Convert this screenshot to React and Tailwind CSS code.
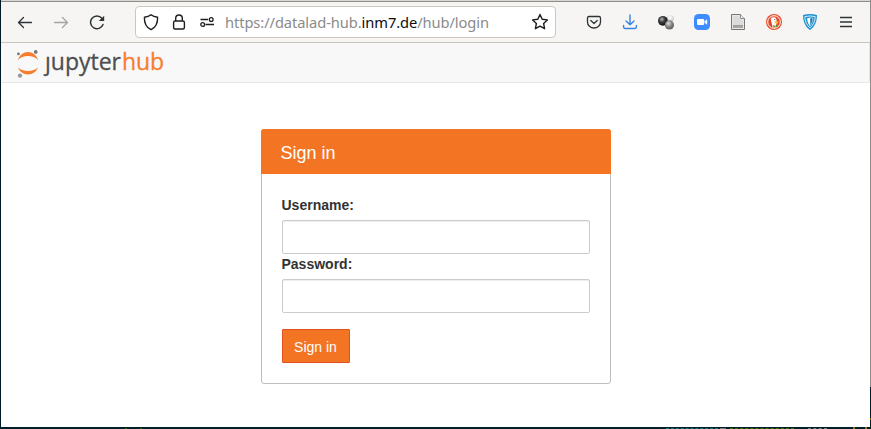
import React from 'react';

function JupyterMark() {
  return (
    <svg className="block h-[40px] w-[24px] shrink-0" viewBox="0 0 24 40">
      <path d="M2 17.200C3.400 12 7.400 9 12 9S20.600 12 22 17.200C19.800 14.200 16 12.900 12 12.900S4.200 14.200 2 17.200Z" fill="#f77d2e" />
      <path d="M2 24.200C3.400 28.700 7.400 31.400 12 31.400S20.600 28.700 22 24.200C19.800 26.800 16 27.900 12 27.900S4.200 26.800 2 24.200Z" fill="#f77d2e" />
      <circle cx="19.700" cy="8.900" r="1.900" fill="#767677" />
      <circle cx="2.400" cy="10.900" r="1.400" fill="#767677" />
      <circle cx="4" cy="32.600" r="2.200" fill="#9a9a9a" />
    </svg>
  );
}

function Toolbar() {
  return (
    <div className="flex h-[41px] items-center border-b border-[#c9c6c0] bg-[#f6f5f4] text-[#2e3436]">
      <svg className="ml-[16px] h-4 w-4 shrink-0" viewBox="0 0 16 16" fill="none" stroke="currentColor" strokeWidth="1.300" strokeLinecap="round" strokeLinejoin="round">
        <path d="M1.700 8.500H14.500M6.500 3.500L1.500 8.500L6.500 13.500" />
      </svg>
      <svg className="ml-[20px] h-4 w-4 shrink-0 text-[#a5a5a4]" viewBox="0 0 16 16" fill="none" stroke="currentColor" strokeWidth="1.300" strokeLinecap="round" strokeLinejoin="round">
        <path d="M1.500 8.500H14.300M9.500 3.500L14.500 8.500L9.500 13.500" />
      </svg>
      <svg className="ml-[20px] h-4 w-4 shrink-0" viewBox="0 0 16 16" fill="none" stroke="currentColor" strokeWidth="1.500" strokeLinecap="round">
        <path d="M14 10.500A6.400 6.400 0 1 1 12.900 4.300" />
        <path d="M15.200 1.700V7H9.800Z" fill="currentColor" stroke="none" />
      </svg>

      <div className="ml-[30px] flex h-[32px] w-[421px] shrink-0 items-center rounded-[4px] border border-[#cdc7c2] bg-white text-[#1e1e1f]">
        <svg className="ml-[7px] h-[18px] w-4 shrink-0" viewBox="0 0 16 18" fill="none" stroke="currentColor" strokeWidth="1.400" strokeLinejoin="round">
          <path d="M8 1.700C9.700 3.100 12 3.900 14.600 4.200C14.800 10 12.800 14.400 8 16.700C3.200 14.400 1.200 10 1.400 4.200C4 3.900 6.300 3.100 8 1.700Z" />
        </svg>
        <svg className="ml-[12px] h-[18px] w-4 shrink-0" viewBox="0 0 16 18" fill="none" stroke="currentColor" strokeWidth="1.400">
          <rect x="2.600" y="8" width="10.800" height="8" rx="1.500" />
          <path d="M4.700 8V5.300A3.300 3.300 0 0 1 11.300 5.300V8" />
        </svg>
        <svg className="ml-[12px] h-[18px] w-4 shrink-0" viewBox="0 0 16 18" fill="none" stroke="currentColor" strokeWidth="1.300">
          <path d="M1.500 6.500H9M6.500 11.500H15" />
          <circle cx="12.200" cy="6.500" r="1.900" />
          <circle cx="3.700" cy="11.500" r="1.900" />
        </svg>
        <div className="ml-[10px] w-[270px] whitespace-nowrap font-['Noto_Sans',sans-serif] text-[14.700px] leading-[20px] tracking-[-0.09px] text-[#8b8b8b]">
          https://datalad-hub.<span className="text-[#0c0c0d]">inm7.de</span>/hub/login
        </div>
        <svg className="ml-auto mr-[6px] h-[18px] w-[18px] shrink-0" viewBox="0 0 18 18" fill="none" stroke="currentColor" strokeWidth="1.400" strokeLinejoin="round">
          <path d="M9 1.500L11.200 6.200L16.400 6.900L12.600 10.400L13.600 15.700L9 13.100L4.400 15.700L5.400 10.400L1.600 6.900L6.800 6.200Z" />
        </svg>
      </div>

      <svg className="ml-[30px] h-4 w-4 shrink-0" viewBox="0 0 16 16" fill="none" stroke="currentColor" strokeWidth="1.300" strokeLinecap="round" strokeLinejoin="round">
        <path d="M3 2.500H13A1.600 1.600 0 0 1 14.500 4V8A6.500 6 0 0 1 1.500 8V4A1.600 1.600 0 0 1 3 2.500Z" />
        <path d="M4.800 6.500L8 9.500L11.200 6.500" />
      </svg>
      <svg className="ml-[20px] h-4 w-4 shrink-0" viewBox="0 0 16 16" fill="none" stroke="#3584e4" strokeWidth="1.400" strokeLinecap="round" strokeLinejoin="round">
        <path d="M8 1V10.500M4 7L8 10.800L12 7M1.600 11.500V13A1.500 1.500 0 0 0 3 14.500H13A1.500 1.500 0 0 0 14.400 13V11.500" />
      </svg>
      <svg className="ml-[20px] h-4 w-4 shrink-0" viewBox="0 0 16 16">
        <defs>
          <radialGradient id="dark" cx=".4" cy=".35" r=".6"><stop stopColor="#bbb" /><stop offset=".45" stopColor="#444" /><stop offset="1" stopColor="#111" /></radialGradient>
          <radialGradient id="grey" cx=".4" cy=".35" r=".7"><stop stopColor="#ddd" /><stop offset=".5" stopColor="#888" /><stop offset="1" stopColor="#555" /></radialGradient>
          <radialGradient id="pale" cx=".4" cy=".35" r=".7"><stop stopColor="#fff" /><stop offset="1" stopColor="#c8c8c8" /></radialGradient>
        </defs>
        <circle cx="12.500" cy="4.500" r="3.500" fill="url(#pale)" />
        <circle cx="4.900" cy="6.800" r="4.900" fill="url(#dark)" />
        <circle cx="11.400" cy="10.900" r="4.600" fill="url(#grey)" />
      </svg>
      <svg className="ml-[20px] h-4 w-4 shrink-0" viewBox="0 0 16 16">
        <rect width="16" height="16" rx="4.500" fill="#3f8cff" />
        <rect x="3" y="5" width="7.200" height="6" rx="1.300" fill="white" />
        <path d="M10.700 7.200L13.200 5.200V10.800L10.700 8.800Z" fill="white" />
      </svg>
      <svg className="ml-[20px] h-4 w-4 shrink-0" viewBox="0 0 16 16">
        <path d="M1.500 .5H10.500L14.500 4.500V15.500H1.500Z" fill="#dcdcdc" stroke="#777" />
        <path d="M2.500 1.500H10V5H13.500V14.500H2.500Z" fill="none" stroke="#f0f0f0" strokeWidth=".6" />
        <path d="M10.500 .5V4.500H14.500" fill="#eee" stroke="#777" strokeWidth=".8" />
        <rect x="3.500" y="11.300" width="9" height="2" fill="#aaa" stroke="#888" strokeWidth=".6" />
      </svg>
      <svg className="ml-[20px] h-4 w-4 shrink-0" viewBox="0 0 16 16">
        <circle cx="8" cy="8" r="8" fill="#e8502c" />
        <circle cx="8" cy="8" r="6.300" fill="#e54524" stroke="white" strokeWidth="1" />
        <path d="M4.800 5.500C4.800 3.500 6.500 2.800 8.300 3.300C10.200 3.900 10.600 5.300 10.600 7V9L9.400 13.600L6.600 13.300Z" fill="white" />
        <circle cx="8.800" cy="5.500" r=".6" fill="#245c7b" />
        <path d="M8.600 7.300L12.500 7.600L12 9.600L8.800 9.200Z" fill="#fcb92a" />
        <path d="M7 11L9.500 11.700L12 10.600V13L9.500 12.600L7.300 13.400Z" fill="#4caf3f" />
      </svg>
      <svg className="ml-[20px] h-4 w-4 shrink-0" viewBox="0 0 16 16">
        <path d="M1 1Q8-.9 15 1C15 8 12.500 13 8 16C3.500 13 1 8 1 1Z" fill="#1f93d1" />
        <path d="M2.800 2.600Q8 1.300 13.200 2.600C13 7.700 11.200 11.400 8 13.800C4.800 11.400 3 7.700 2.800 2.600Z" fill="none" stroke="white" strokeWidth=".8" />
        <path d="M5.200 4.200Q6.500 3.800 8 3.700V11.800C6.300 10.200 5.300 7.700 5.200 4.200Z" fill="white" />
        <path d="M8 3.700Q9.500 3.800 10.800 4.200C10.700 7.700 9.700 10.200 8 11.800Z" fill="#1679b3" stroke="white" strokeWidth=".5" />
      </svg>
      <svg className="ml-[20px] h-4 w-4 shrink-0" viewBox="0 0 16 16" stroke="currentColor" strokeWidth="1.300">
        <path d="M2 3.500H14M2 8H14M2 12.500H14" />
      </svg>
    </div>
  );
}

function Field({ label, type }) {
  return (
    <label className="block">
      <span className="mb-[5px] block text-[14px] font-bold leading-[20px]">{label}</span>
      <input
        type={type}
        className="block h-[34px] w-full rounded-[2px] border border-[#ccc] bg-white px-3 shadow-[inset_0_1px_1px_rgba(0,0,0,0.075)] outline-none"
      />
    </label>
  );
}

function LoginCard() {
  return (
    <form className="mx-auto mt-[46px] h-[255px] w-[350px] rounded-[3px] border border-[#bdbdbd] bg-white">
      <h1 className="-mx-px -mt-px h-[45px] rounded-t-[3px] bg-[#f37524] pl-[20px] pt-[12px] text-[18px] leading-[24px] text-white">
        Sign in
      </h1>
      <div className="px-[20px] pt-[21px]">
        <Field label="Username:" type="text" />
        <Field label="Password:" type="password" />
        <button type="button" className="mt-[16px] block h-[34px] w-[68px] rounded-[1px] border border-[#e34f21] bg-[#f37524] pt-[2px] text-[14px] leading-[20px] text-white">
          Sign in
        </button>
      </div>
    </form>
  );
}

export default function App() {
  return (
    <div className="flex h-[429px] w-[871px] flex-col overflow-hidden bg-[#002029] font-['Liberation_Sans',Arial,sans-serif] text-[#333]">
      <div className="flex h-[427px]">
        <div className="w-px bg-[#001b26]" />
        <div className="flex w-[869px] flex-col bg-white">
          <div className="h-[2px] shrink-0 border-b border-[#8e8d89] bg-[#dad7d3]" />
          <Toolbar />
          <header className="flex h-[40px] shrink-0 rounded-b-[2px] border-b border-r border-[#e7e7e7] bg-[#f8f8f8] pl-[15px]">
            <JupyterMark />
            <div className="ml-[5px] whitespace-nowrap font-['Open_Sans',sans-serif] text-[23px] leading-[36px] text-[#4e4e50] [-webkit-text-stroke:0.3px]">
              ȷupyter<span className="ml-[1px] tracking-[-0.1px] text-[#f77d2e]">hub</span>
            </div>
          </header>
          <LoginCard />
        </div>
        <div className="flex w-px flex-col">
          <div className="h-[387px] bg-[#8d8d8b]" />
          <div className="h-[31px] bg-[#001b26]" />
          <div className="h-[2px] bg-[#8c7500]" />
        </div>
      </div>
      <div className="flex h-[2px] items-end">
        <div className="ml-[125px] h-px w-[2px] bg-[#276000]" />
        <div className="ml-[13px] h-px w-[2px] bg-[#276000]" />
        <div className="ml-[524px] h-px w-[52px] border-t border-dashed border-[#177d7d]" />
        <div className="ml-[2px] h-px w-[6px] bg-[#777]" />
        <div className="ml-[4px] h-px w-[64px] border-t border-dashed border-[#477300]" />
        <div className="ml-[14px] h-px w-[19px] border-t border-dashed border-[#75817f]" />
        <div className="ml-[26px] h-[2px] w-[2px] bg-[#8c7500]" />
        <div className="ml-[10px] h-[2px] w-[2px] bg-[#8c7500]" />
      </div>
    </div>
  );
}
